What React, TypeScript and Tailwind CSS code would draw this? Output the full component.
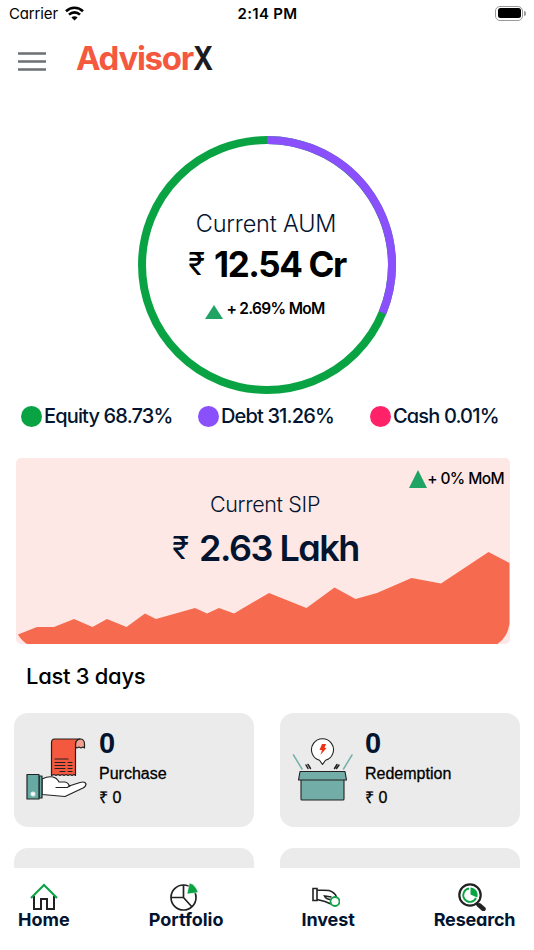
import type { ReactNode } from "react";

const chartPath =
  "M2 176.5 L21 169 L38 169 L58 161 L76.5 169 L91 161 L110.5 169 L129 155.5 L140 161 L179 150 L191 155.5 L203 150 L218 155.5 L253 135 L290.5 150 L318.5 129.5 L339.5 141 L361 135 L395.5 120 L425 125.5 L472.5 94 L493.5 105 L493.5 165 Q492 179 481.5 186 L11 186 Q5 182 2 176.5 Z";

const StatusBar = () => (
  <div className="flex h-7 shrink-0 items-center pl-[9px] pr-[8px]">
    <div className="flex flex-1 items-center gap-[7px]">
      <span className="text-[15px] tracking-[-0.15px]">Carrier</span>
      <svg className="-mt-[2px]" width="19" height="15" viewBox="0 0 19 15" fill="none" stroke="#000" strokeWidth="2.6">
        <path d="M1 5.2C5.8 0.6 13.2 0.6 18 5.2" />
        <path d="M4 8.6C7.2 5.6 11.8 5.6 15 8.6" />
        <path d="M9.5 14.6L6.4 11.5C8.1 9.9 10.9 9.9 12.6 11.5Z" fill="#000" stroke="none" />
      </svg>
    </div>
    <span className="text-[15px] font-semibold tracking-[0.3px]">2:14 PM</span>
    <div className="-mt-[2px] flex flex-1 items-center justify-end gap-px">
      <div className="h-[15px] w-[28px] rounded-[5px] border border-[#999] p-[1.5px]">
        <div className="h-full w-full rounded-[2.5px] bg-black" />
      </div>
      <div className="h-[5px] w-[2px] rounded-r-full bg-[#999]" />
    </div>
  </div>
);

const Header = () => (
  <header className="flex h-[70px] shrink-0 items-start pl-[18px]">
    <svg className="mt-[24px]" width="28" height="19" viewBox="0 0 28 19" stroke="#6c7075" strokeWidth="2.5">
      <path d="M0 1.500H28M0 9.500H28M0 17.500H28" />
    </svg>
    <h1 className="ml-[30px] mt-[10px] text-[33px] leading-[40px] font-bold tracking-[-1.3px] text-[#f4583e]">
      Advisor<span className="inline-block origin-left scale-x-[0.83] text-[#1c1c1e]">X</span>
    </h1>
  </header>
);

const Triangle = ({ className }: { className: string }) => (
  <svg className={className} viewBox="0 0 18 18" preserveAspectRatio="none" fill="#1fa463">
    <path d="M9 0L18 18H0Z" />
  </svg>
);

const AumRing = () => (
  <section className="mx-auto mt-[38px] grid h-[258px] w-[258px] shrink-0">
    <svg className="col-start-1 row-start-1" width="258" height="258" viewBox="0 0 258 258" fill="none" strokeWidth="8">
      <circle cx="129" cy="129" r="125" stroke="#0aa344" />
      <path d="M129 4A125 125 0 0 1 244.5 176.8" stroke="#8950fc" />
    </svg>
    <div className="col-start-1 row-start-1 flex flex-col items-center pt-[72px]">
      <div className="mr-[2px] text-[23.5px] leading-8 font-light tracking-[-0.2px] text-[#02142f]">Current AUM</div>
      <div className="mt-[4px] flex h-[40px] items-center gap-[9px] text-[35px] font-bold text-black">
        <span className="text-[31px] font-normal">₹</span>
        <span className="tracking-[-1.4px]">12.54 Cr</span>
      </div>
      <div className="mt-[13px] mr-[4px] flex h-[24px] items-center gap-[3px] text-[15.5px] font-semibold text-black">
        <Triangle className="mt-[5px] h-[14px] w-[18px]" />
        <span className="tracking-[-0.7px]">+ 2.69% MoM</span>
      </div>
    </div>
  </section>
);

const LegendItem = ({ color, width, children }: { color: string; width: string; children: ReactNode }) => (
  <div className={`flex items-center gap-[2px] whitespace-nowrap ${width}`}>
    <div className={`h-[21px] w-[21px] shrink-0 rounded-full ${color}`} />
    <span className="text-[20px] font-medium tracking-[-0.85px] text-[#02142f]">{children}</span>
  </div>
);

const SipCard = () => (
  <section className="ml-[16px] mt-[27px] grid h-[186px] w-[494px] shrink-0 overflow-hidden rounded-[5px] bg-[#fee8e5]">
    <svg className="col-start-1 row-start-1" width="494" height="186" viewBox="0 0 494 186">
      <path d={chartPath} fill="#f66a4f" />
    </svg>
    <div className="col-start-1 row-start-1 flex flex-col items-center">
      <div className="mt-[9px] flex h-[24px] items-center self-end pr-[6px] text-[15.5px] font-medium text-black">
        <Triangle className="h-[18px] w-[18px]" />
        <span className="tracking-[-0.6px]">+ 0% MoM</span>
      </div>
      <div className="-mt-px ml-[4px] text-[21.5px] leading-7 font-light tracking-[-0.35px] text-[#02142f]">Current SIP</div>
      <div className="mt-[8px] ml-[5px] flex h-[44px] items-center gap-[10px] text-[36px] font-semibold text-[#02142f]">
        <span className="text-[31px] font-normal">₹</span>
        <span className="tracking-[-1.5px]">2.63 Lakh</span>
      </div>
    </div>
  </section>
);

const PurchaseIcon = () => (
  <svg width="62" height="66" viewBox="0 0 62 66" stroke="#222" strokeWidth="1.2" strokeLinejoin="round" strokeLinecap="round">
    <path d="M49.5 9V5Q51 1 54 1Q58.5 1 58.5 6V10L57 9L55 10L53 9L51 10Z" fill="#f3a091" />
    <path d="M28.500 1H54Q49.5 2 49.5 6V37.500L48 36.500L46 37.500L44 36.500L42 37.500L40 36.500L38 37.500L36 36.500L34 37.500L32 36.500L30 37.500L28 36.500L25.500 37.500V5Q25.500 1 28.500 1Z" fill="#f4583e" />
    <path d="M29 21H42M29 24.5H39M42 24.5H46M29 27.5H39M42 27.5H46M29 30.5H39M42 30.5H46M34 33.5H39M42 33.5H46" />
    <path d="M16 41Q22 38 27 39Q31 40 33 44H39Q43 45 43 48L54 44.500Q59 43 60 46Q60 48.500 57 50L39 58.500L16 56.500Z" fill="#fff" />
    <path d="M30 49.500H41L44 48" fill="none" />
    <path d="M13 38H16V60H13Z" fill="#66aaa3" />
    <path d="M1 36.500H13V61H1Z" fill="#66aaa3" />
    <circle cx="7" cy="56" r="2" fill="#fff" stroke="#dce8e6" />
  </svg>
);

const RedemptionIcon = () => (
  <svg width="62" height="66" viewBox="0 0 62 66" stroke="#222" strokeWidth="1.1" strokeLinejoin="round" strokeLinecap="round">
    <path d="M1.5 17L10 31M60 17L51.5 31" stroke="#75b1aa" strokeWidth="1.5" />
    <path d="M30.5 26.5L27.5 22.3A11 11 0 1 1 33.5 22.3Z" fill="#fff" />
    <path d="M30 6H34L32.5 10H34.5L28.5 17L30 12H27.5Z" fill="#f03218" stroke="none" />
    <path d="M14 27L16 30.5M16 26.5L18.5 30.5M45 26.5L42.5 30.5M47 27L44.5 30.5" strokeWidth="1.5" />
    <path d="M9 40H52V61Q52 62 51 62H10Q9 62 9 61Z" fill="#72ada7" />
    <path d="M8 33.5H53L54.5 42H6.5Z" fill="#72ada7" />
  </svg>
);

const StatCard = ({ icon, label }: { icon?: ReactNode; label?: string }) => (
  <div className="flex h-[114px] rounded-[14px] bg-[#ebebeb] pl-[12px] pt-[14px] font-['Liberation_Sans',sans-serif] text-black">
    <div className="mt-[11px] w-[73px]">{icon}</div>
    <div>
      <div className="text-[29px] leading-[32px] font-bold text-[#02142f]">0</div>
      {label && (
        <div className="mt-[3px] text-[16px] leading-[24px] [-webkit-text-stroke:0.3px_black]">
          <div>{label}</div>
          <div>₹ 0</div>
        </div>
      )}
    </div>
  </div>
);

const NavItem = ({ icon, label, className }: { icon: ReactNode; label: string; className: string }) => (
  <div className={`flex flex-col items-center text-[18px] leading-[20px] font-bold text-[#02142f] ${className}`}>
    {icon}
    <span className="-mt-px">{label}</span>
  </div>
);

const HomeIcon = () => (
  <svg width="28" height="28" viewBox="0 0 28 28" fill="none" strokeWidth="2">
    <path d="M4 13V26H11V16H17V26H24V13" stroke="#222" />
    <path d="M1 15L14 2L27 15" stroke="#0aa344" />
  </svg>
);

const PortfolioIcon = () => (
  <svg className="-ml-[5px]" width="28" height="28" viewBox="0 0 28 28" fill="none" stroke="#222" strokeWidth="1.7">
    <circle cx="13.5" cy="14.5" r="12.5" />
    <path d="M13.5 2V14.5M1 14.5H13.5L22 24" />
    <path d="M17 11L19.5 0Q26 2 28 9.5Z" fill="#0aa344" stroke="#fff" strokeWidth="0.5" />
  </svg>
);

const InvestIcon = () => (
  <svg className="-ml-[4px]" width="28" height="28" viewBox="0 0 28 28" fill="none" stroke="#222" strokeWidth="1.6">
    <path d="M1 5.500H5V17.500H1ZM5 7L17 7.500Q23 9.500 24.500 14M5 16.500L13 18.500L19 21M19.500 14L12.500 13Q14 16.500 19 16.500" />
    <circle cx="23" cy="18.500" r="4.500" fill="#fff" stroke="#0aa344" strokeWidth="1.8" />
  </svg>
);

const ResearchIcon = () => (
  <svg className="-ml-[5px]" width="28" height="28" viewBox="0 0 28 28" fill="none">
    <path d="M18 20L21 23" stroke="#222" strokeWidth="3" />
    <path d="M21.5 22.5L25.5 26" stroke="#222" strokeWidth="4.5" strokeLinecap="round" />
    <circle cx="12" cy="12" r="10.7" stroke="#222" strokeWidth="2.2" />
    <path d="M11 5.5A6.7 6.7 0 1 0 18 15" stroke="#0aa344" strokeWidth="1.8" />
    <path d="M12.5 4.5A7.5 7.5 0 0 1 19.2 14.5L12.5 11.5Z" fill="#0aa344" />
  </svg>
);

export default function App() {
  return (
    <div className="flex h-[950px] w-[534px] flex-col overflow-hidden bg-white font-['Inter',sans-serif] [font-feature-settings:'cv11','calt'_0]">
      <main className="flex h-[868px] shrink-0 flex-col overflow-hidden">
        <StatusBar />
        <Header />
        <AumRing />
        <div className="mt-[7px] flex h-[30px] shrink-0 items-center pl-[21px]">
          <LegendItem color="bg-[#0aa344]" width="w-[177px]">Equity 68.73%</LegendItem>
          <LegendItem color="bg-[#8950fc]" width="w-[172px]">Debt 31.26%</LegendItem>
          <LegendItem color="bg-[#ff2269]" width="w-[140px]">Cash 0.01%</LegendItem>
        </div>
        <SipCard />
        <h2 className="ml-[26px] mt-[16px] shrink-0 text-[22px] leading-[32px] font-medium tracking-[-0.3px] text-black">Last 3 days</h2>
        <div className="mt-[21px] grid shrink-0 grid-cols-[240px_240px] gap-x-[26px] gap-y-[20.5px] pl-[14px]">
          <StatCard icon={<PurchaseIcon />} label="Purchase" />
          <StatCard icon={<RedemptionIcon />} label="Redemption" />
          <StatCard />
          <StatCard />
        </div>
      </main>
      <nav className="flex h-[82px] shrink-0 items-start pt-[15px]">
        <NavItem icon={<HomeIcon />} label="Home" className="ml-[18px]" />
        <NavItem icon={<PortfolioIcon />} label="Portfolio" className="ml-[79px]" />
        <NavItem icon={<InvestIcon />} label="Invest" className="ml-[78px] tracking-[-0.1px]" />
        <NavItem icon={<ResearchIcon />} label="Research" className="ml-[79px] tracking-[-0.2px]" />
      </nav>
    </div>
  );
}
